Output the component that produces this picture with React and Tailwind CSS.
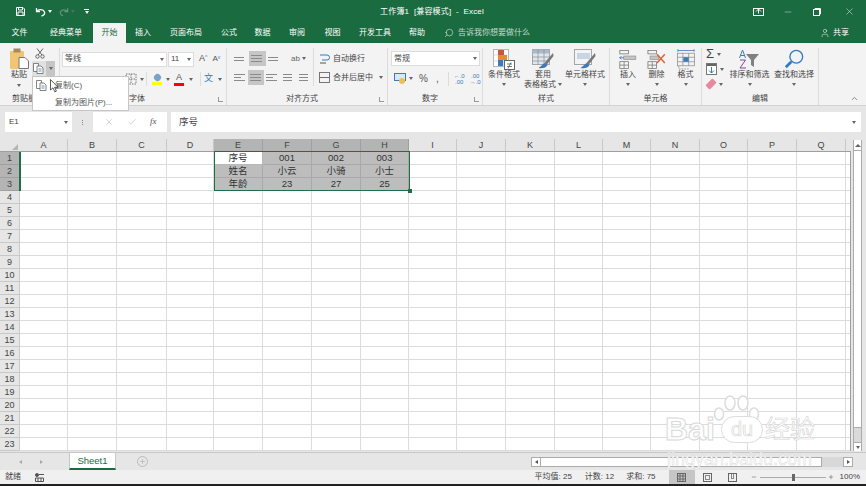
import { Search, User, Minus, X, Check, Plus, ChevronUp } from 'lucide-react'

const columns = [
  ['A', 48], ['B', 49], ['C', 50], ['D', 47], ['E', 49], ['F', 49], ['G', 49], ['H', 48],
  ['I', 48], ['J', 49], ['K', 49], ['L', 48], ['M', 48], ['N', 49], ['O', 48], ['P', 49], ['Q', 49],
]
const rows = Array.from({ length: 23 }, (_, i) => i + 1)
const tabs = [
  ['文件', 'w-[39px]'], ['经典菜单', 'w-[54px]'], ['开始', 'w-[33px]'], ['插入', 'w-[34px]'], ['页面布局', 'w-[52px]'],
  ['公式', 'w-[34px]'], ['数据', 'w-[33px]'], ['审阅', 'w-[36px]'], ['视图', 'w-[35px]'], ['开发工具', 'w-[50px]'], ['帮助', 'w-[34px]'],
]
const cells = {
  E1: '序号', F1: '001', G1: '002', H1: '003',
  E2: '姓名', F2: '小云', G2: '小骑', H2: '小士',
  E3: '年龄', F3: '23', G3: '27', H3: '25',
}

function Caret({ className = '' }) {
  return <span className={`inline-block w-0 h-0 border-x-[2.5px] border-x-transparent border-t-[3px] border-t-[#666] ${className}`} />
}

function AlignIcon({ widths, active }) {
  return (
    <span className={`flex flex-col justify-center gap-[2px] w-[17px] h-[15px] px-[2px] ${active ? 'bg-[#c6c6c6]' : ''}`}>
      {widths.map((w, i) => <span key={i} className="h-px bg-[#8a8a8a]" style={{ width: w }} />)}
    </span>
  )
}

function Group({ width, label, labelClass = 'text-center', launcher, children }) {
  return (
    <div className="relative flex flex-col h-full shrink-0 border-r border-[#dcdcdc]" style={{ width }}>
      <div className="flex-1 min-h-0">{children}</div>
      <div className={`h-[11px] text-[8px] leading-[10px] text-[#444] ${labelClass}`}>{label}</div>
      {launcher && <span className="absolute right-[3px] bottom-[3px] w-[5px] h-[5px] border-l border-b border-[#999]" />}
    </div>
  )
}

function BigButton({ width, lines, caret, children }) {
  return (
    <div className="flex flex-col items-center shrink-0" style={{ width }}>
      <div className="h-[22px] flex items-center justify-center">{children}</div>
      {lines.map(l => <div key={l} className="text-[8px] leading-[10px] text-[#444] whitespace-nowrap">{l}{caret === 'inline' && l === lines[lines.length - 1] ? <Caret className="ml-[2px] align-middle" /> : null}</div>)}
      {caret === true && <Caret className="mt-[3px]" />}
    </div>
  )
}

function PasteIcon() {
  return (
    <svg width="19" height="21" viewBox="0 0 19 21">
      <rect x="0" y="3" width="14" height="18" rx="1" fill="#f0c674" />
      <rect x="3.500" y="0.500" width="7" height="4" fill="#a58a5c" />
      <path d="M9 9.500h6l3.500 3.500v7.500H9z" fill="#fff" stroke="#777" />
    </svg>
  )
}

function CutIcon() {
  return (
    <svg width="10" height="11" viewBox="0 0 10 11" fill="none" stroke="#666" strokeWidth="1">
      <path d="M2 0.500 7 7M8 0.500 3 7" />
      <circle cx="2.500" cy="8.500" r="1.700" />
      <circle cx="7.500" cy="8.500" r="1.700" />
    </svg>
  )
}

function CopyIcon() {
  return (
    <svg width="11" height="11" viewBox="0 0 11 11" fill="#fff" stroke="#666" strokeWidth="0.8">
      <path d="M0.500 0.500h5v8h-5z" />
      <path d="M4 3h4l2 2v5.500H4z" />
      <path d="M5.500 6h3M5.500 8h3" stroke="#3d7ab8" />
    </svg>
  )
}

function BorderIcon() {
  return (
    <svg width="12" height="12" viewBox="0 0 12 12" fill="none" stroke="#777" strokeDasharray="1.500 1">
      <rect x="1" y="1" width="10" height="10" />
      <path d="M6 1v10M1 6h10" />
    </svg>
  )
}

function CondFormatIcon() {
  return (
    <svg width="22" height="21" viewBox="0 0 22 21">
      <rect x="0.500" y="0.500" width="15" height="17" fill="#fff" stroke="#b5b5b5" />
      <path d="M5.500 0.500v17M10.500 0.500v17M0.500 6h15M0.500 12h15" stroke="#cfcfcf" strokeWidth="0.700" />
      <rect x="5" y="1" width="6" height="6" fill="#c8553d" />
      <rect x="5" y="6" width="9" height="5" fill="#e8892c" />
      <rect x="5" y="11" width="5" height="6" fill="#3d7ab8" />
      <rect x="11.500" y="11.500" width="10" height="9" fill="#fff" stroke="#666" />
      <path d="M14 15h5M14 17.500h5M15 19.500l3-6" stroke="#444" strokeWidth="0.700" />
    </svg>
  )
}

function TableIcon({ faded }) {
  return (
    <svg width="22" height="21" viewBox="0 0 22 21">
      <rect x="0.500" y="0.500" width="17" height="15" fill={faded ? '#f4f4f4' : '#dfe6ef'} stroke="#a5a5a5" />
      {faded
        ? <rect x="3" y="4" width="13" height="6" fill="#c7d5e6" />
        : <rect x="0.500" y="0.500" width="17" height="4" fill="#a9b8cc" />}
      {!faded && <path d="M6 0.500v15M12 0.500v15M0.500 8h17M0.500 12h17" stroke="#8d8d8d" strokeWidth="0.700" />}
      <path d="M21 4 12.500 14l2 2L21.500 7z" fill="#777" />
      <path d="M12.500 14c-2 1-3 3-6 5 4 1 8-.5 9-3z" fill="#3d7ab8" />
    </svg>
  )
}

function InsertIcon() {
  return (
    <svg width="18" height="19" viewBox="0 0 20 22" fill="none" stroke="#777" strokeWidth="0.900">
      <rect x="0.500" y="0.500" width="10" height="4" />
      <rect x="5" y="7" width="14" height="4" fill="#c5c5c5" stroke="#999" />
      <path d="M0 9h5M2.500 7 0.500 9l2 2" stroke="#2f6fb0" />
      <rect x="0.500" y="13.500" width="10" height="8" />
      <path d="M5.500 13.500v8M0.500 17.500h10" />
    </svg>
  )
}

function DeleteIcon() {
  return (
    <svg width="20" height="19" viewBox="0 0 22 22" fill="none" stroke="#777" strokeWidth="0.900">
      <rect x="0.500" y="0.500" width="10" height="4" />
      <rect x="3" y="7" width="10" height="4" fill="#c5c5c5" stroke="#999" />
      <rect x="0.500" y="13.500" width="10" height="8" />
      <path d="M5.500 13.500v8M0.500 17.500h10" />
      <path d="M11 5l9 10M20 5l-9 10" stroke="#d9663c" strokeWidth="1.800" />
    </svg>
  )
}

function FormatIcon() {
  return (
    <svg width="18" height="21" viewBox="0 0 20 23" fill="none" stroke="#888" strokeWidth="0.800">
      <path d="M1 1.500h18M1 0v3M19 0v3" stroke="#2f6fb0" />
      <rect x="0.500" y="4.500" width="19" height="14" />
      <path d="M6.500 4.500v14M13 4.500v14M0.500 9h19M0.500 14h19" />
      <rect x="7" y="9" width="6" height="5" fill="#3d7ab8" stroke="none" />
      <path d="M2 19v3h12" strokeDasharray="2 1" />
    </svg>
  )
}

function SortIcon() {
  return (
    <svg width="21" height="20" viewBox="0 0 21 20">
      <path d="M0.500 9 3.500 1 6.500 9M1.500 6.500h4" fill="none" stroke="#3d7ab8" strokeWidth="1" />
      <path d="M1 11h5.500L1 19h6" fill="none" stroke="#7c4aa0" strokeWidth="1" />
      <path d="M7 5h13l-5 6v7l-3-2v-5z" fill="#808080" />
    </svg>
  )
}

function SearchBig() {
  return (
    <svg width="20" height="20" viewBox="0 0 22 22" fill="none" stroke="#2f7cc1">
      <circle cx="13.500" cy="8.500" r="7" strokeWidth="1.500" />
      <path d="M8 14 2 20" strokeWidth="3" />
    </svg>
  )
}

function Ribbon() {
  return (
    <div className="flex h-[63px] bg-[#f3f3f3] pt-[5px] border-b border-[#d2d2d2]">
      <Group width={60} label="剪贴板" labelClass="pl-[12px]">
        <div className="flex">
          <div className="w-[32px] flex flex-col items-center pl-[6px]">
            <PasteIcon />
            <div className="text-[8px] leading-[10px] text-[#444] mt-[1px]">粘贴</div>
            <Caret className="mt-[4px]" />
          </div>
          <div className="flex flex-col items-start">
            <span className="h-[13px] pl-[3px]"><CutIcon /></span>
            <span className="flex h-[15px]">
              <span className="flex items-center w-[14px] pl-[1px] bg-[#e0e0e0]"><CopyIcon /></span>
              <span className="flex items-center justify-center w-[9px] bg-[#c6c6c6]"><Caret /></span>
            </span>
          </div>
        </div>
      </Group>

      <Group width={167} label="字体" labelClass="text-center pr-[12px]" launcher>
        <div className="flex items-center gap-[1px] pl-[2px] h-[16px] mt-[3px]">
          <div className="flex items-center justify-between w-[105px] h-[15px] bg-white border border-[#dcdcdc] px-[2px] text-[8px] text-[#444]">等线<Caret /></div>
          <div className="flex items-center justify-between w-[26px] h-[15px] bg-white border border-[#dcdcdc] px-[2px] text-[8px] text-[#444]">11<Caret /></div>
          <span className="ml-[4px] text-[9px] text-[#555]">A<sup className="text-[5px] text-[#3d7ab8]">^</sup></span>
          <span className="ml-[4px] text-[8px] text-[#555]">A<sup className="text-[5px] text-[#3d7ab8]">v</sup></span>
        </div>
        <div className="flex items-center h-[16px] mt-[4px] pl-[65px]">
          <BorderIcon /><Caret className="ml-[3px]" />
          <span className="w-px h-[14px] bg-[#dcdcdc] ml-[2px]" />
          <span className="ml-[5px] flex flex-col items-center w-[10px]">
            <span className="w-[7px] h-[7px] rounded-sm bg-[#7aa3c9] rotate-45" />
            <span className="w-[10px] h-[3px] mt-[1px] bg-[#ffff00]" />
          </span>
          <Caret className="ml-[4px]" />
          <span className="ml-[4px] flex flex-col items-center w-[10px]">
            <span className="text-[9px] leading-[9px] text-[#555]">A</span>
            <span className="w-[10px] h-[3px] mt-[1px] bg-[#ff0000]" />
          </span>
          <Caret className="ml-[5px]" />
          <span className="w-px h-[14px] bg-[#dcdcdc] ml-[7px]" />
          <span className="ml-[3px] text-[9px] text-[#2f7cc1]">文</span>
          <Caret className="ml-[5px]" />
        </div>
      </Group>

      <Group width={161} label="对齐方式" labelClass="text-center pr-[10px]" launcher>
        <div className="flex h-[42px]">
          <div className="flex flex-col gap-[4px] pt-[3px] pl-[5px] w-[87px] border-r border-[#dcdcdc] h-[38px]">
            <div className="flex items-center h-[15px]">
              <AlignIcon widths={[10, 10]} /><AlignIcon widths={[11, 11, 11]} active /><AlignIcon widths={[10, 10]} />
              <span className="ml-[8px] text-[8px] text-[#666]">ab</span><Caret className="ml-[2px]" />
            </div>
            <div className="flex items-center h-[15px]">
              <AlignIcon widths={[11, 7, 11]} /><AlignIcon widths={[11, 11, 11]} active /><AlignIcon widths={[11, 7, 11]} />
              <AlignIcon widths={[9, 9, 9]} /><AlignIcon widths={[9, 9, 9]} />
            </div>
          </div>
          <div className="flex flex-col gap-[4px] pt-[3px] pl-[5px] text-[8px] text-[#444]">
            <div className="flex items-center gap-[3px] h-[15px]">
              <svg width="11" height="12" viewBox="0 0 11 12" fill="none" stroke="#555"><path d="M1 2h7a2.500 2.500 0 0 1 0 5H3" stroke="#2f7cc1" /><path d="M1 10h6" /></svg>
              自动换行
            </div>
            <div className="flex items-center gap-[3px] h-[15px] whitespace-nowrap">
              <svg width="11" height="11" viewBox="0 0 11 11" fill="none" stroke="#777"><rect x="0.500" y="0.500" width="10" height="10" /><path d="M0.500 5.500h10" stroke="#2f7cc1" /></svg>
              合并后居中<Caret className="ml-[3px]" />
            </div>
          </div>
        </div>
      </Group>

      <Group width={95} label="数字" labelClass="text-center pr-[10px]" launcher>
        <div className="flex items-center justify-between w-[89px] h-[15px] mt-[3px] ml-[3px] bg-white border border-[#dcdcdc] px-[2px] text-[8px] text-[#444]">常规<Caret /></div>
        <div className="flex items-center h-[15px] mt-[5px] pl-[6px] text-[10px] text-[#555]">
          <svg width="12" height="11" viewBox="0 0 12 11"><rect x="0.500" y="0.500" width="11" height="7" fill="#dbe8f4" stroke="#3d7ab8" /><circle cx="8" cy="8" r="3" fill="#efc04f" /></svg>
          <Caret className="ml-[3px]" />
          <span className="ml-[6px]">%</span>
          <span className="ml-[8px]">,</span>
          <span className="w-px h-[14px] bg-[#dcdcdc] ml-[9px]" />
          <span className="ml-[5px] text-[6px] leading-[6px] text-center text-[#3d7ab8]">←.0<br />.00</span>
          <span className="ml-[5px] text-[6px] leading-[6px] text-center text-[#3d7ab8]">.00<br />→.0</span>
        </div>
      </Group>

      <Group width={127} label="样式">
        <div className="flex pl-[2px]">
          <BigButton width={38} lines={['条件格式']} caret><CondFormatIcon /></BigButton>
          <BigButton width={40} lines={['套用', '表格格式']} caret="inline"><TableIcon /></BigButton>
          <BigButton width={44} lines={['单元格样式']} caret><TableIcon faded /></BigButton>
        </div>
      </Group>

      <Group width={92} label="单元格">
        <div className="flex pl-[4px]">
          <BigButton width={28} lines={['插入']} caret><InsertIcon /></BigButton>
          <BigButton width={29} lines={['删除']} caret><DeleteIcon /></BigButton>
          <BigButton width={29} lines={['格式']} caret><FormatIcon /></BigButton>
        </div>
      </Group>

      <Group width={117} label="编辑">
        <div className="flex">
          <div className="flex flex-col gap-[3px] pl-[4px] w-[25px] shrink-0">
            <span className="flex items-center gap-[3px] h-[12px] text-[13px] leading-[12px] text-[#444]">Σ<Caret /></span>
            <span className="flex items-center gap-[3px] h-[12px]">
              <svg width="11" height="12" viewBox="0 0 11 12"><rect x="0.500" y="0.500" width="10" height="11" fill="#fff" stroke="#777" /><rect x="1" y="1" width="9" height="2" fill="#666" /><path d="M5.500 4v6M3 7.500 5.500 10 8 7.500" fill="none" stroke="#2f7cc1" /></svg>
              <Caret />
            </span>
            <span className="flex items-center gap-[3px] h-[12px]">
              <span className="w-[10px] h-[6px] bg-[#e48a9a] -rotate-45 rounded-[1px]" />
              <Caret />
            </span>
          </div>
          <BigButton width={45} lines={['排序和筛选']} caret><SortIcon /></BigButton>
          <BigButton width={44} lines={['查找和选择']} caret><SearchBig /></BigButton>
        </div>
      </Group>

      <div className="flex-1 flex items-end justify-end pr-[7px] pb-[2px]">
        <ChevronUp size={9} color="#666" />
      </div>
    </div>
  )
}

function Sheet() {
  return (
    <div className="flex-1 flex min-h-0 bg-[#e6e6e6]">
      <div className="relative w-[851px] shrink-0">
        <div className="flex h-[13px] bg-[#e6e6e6] border-b border-[#9f9f9f]">
          <div className="w-[20px] shrink-0 flex items-end justify-end pr-[2px] pb-[1px]">
            <span className="w-0 h-0 border-l-[6px] border-l-transparent border-b-[6px] border-b-[#b5b5b5]" />
          </div>
          {columns.map(([c, w]) => (
            <div
              key={c}
              style={{ width: w }}
              className={`shrink-0 text-center text-[9px] leading-[12px] text-[#444] border-r ${'EFGH'.includes(c) ? 'bg-[#b4b4b4] border-[#a0a0a0]' : 'border-[#c8c8c8]'}`}
            >
              {c}
            </div>
          ))}
        </div>
        {rows.map(r => (
          <div key={r} className="flex h-[13px] bg-white border-r border-[#9f9f9f]">
            <div className={`w-[20px] shrink-0 text-center text-[9px] leading-[12px] text-[#444] border-r border-b ${r <= 3 ? 'bg-[#b4b4b4] border-[#a0a0a0]' : 'bg-[#e6e6e6] border-[#c8c8c8]'}`}>{r}</div>
            {columns.map(([c, w]) => {
              const selected = r <= 3 && 'EFGH'.includes(c)
              const first = r === 1 && c === 'E'
              return (
                <div
                  key={c}
                  style={{ width: w }}
                  className={`shrink-0 text-center text-[9.500px] leading-[12px] text-[#333] border-r border-b ${first ? 'bg-white border-[#b8b8b8]' : selected ? 'bg-[#bdbdbd] border-[#a9a9a9]' : 'border-[#dcdcdc]'}`}
                >
                  {cells[c + r]}
                </div>
              )
            })}
            <div className="flex-1 border-b border-[#dcdcdc]" />
          </div>
        ))}
        {/* selection border */}
        <div className="absolute left-[214px] top-[12px] w-[196px] h-[40px] border-[1.500px] border-[#1f6e46]">
          <span className="absolute -right-[3px] -bottom-[3px] w-[4px] h-[4px] bg-[#1f6e46]" />
        </div>
        <div className="absolute left-[19px] top-[13px] w-[1.500px] h-[39px] bg-[#1f6e46]" />
      </div>
      <div className="w-[15px] shrink-0 pl-[2px] pr-[4px] pt-[1px]">
        <div className="flex flex-col h-[311px] border-x border-[#ababab] bg-[#dadada]">
          <div className="h-[11px] flex items-center justify-center border-b border-[#ababab] bg-white">
            <span className="w-0 h-0 border-x-[3px] border-x-transparent border-b-[3px] border-b-[#666]" />
          </div>
          <div className="h-[277px] bg-white border-b border-[#ababab]" />
          <div className="flex-1" />
          <div className="h-[9px] flex items-center justify-center bg-white border-t border-[#ababab]">
            <Caret />
          </div>
        </div>
      </div>
    </div>
  )
}

export default function App() {
  return (
    <div className="relative w-[866px] h-[486px] overflow-hidden flex flex-col bg-[#e6e6e6] font-['Liberation_Sans','Noto_Sans_CJK_SC',sans-serif]">
      {/* ── Title bar ─────────────────────────── */}
      <div className="relative flex items-center h-[23px] bg-[#1b6b40] text-white">
        <svg className="ml-[16px]" width="9" height="9" viewBox="0 0 9 9" fill="none" stroke="#fff"><path d="M0.500 0.500h6.500l1.500 1.500v6.500h-8z" /><path d="M2.500 0.500v2.500h4v-2.500M2 8.500v-3.500h5v3.500" /></svg>
        <svg className="ml-[10px]" width="11" height="10" viewBox="0 0 11 10" fill="none" stroke="#fff" strokeWidth="1.300"><path d="M1.500 1v3.500h3.500" /><path d="M1.500 4.500c2-2.500 7-2.500 8 .5 .5 2-1 3.500-3 4" /></svg>
        <Caret className="ml-[2px] border-t-white" />
        <svg className="ml-[7px] opacity-30" width="10" height="10" viewBox="0 0 11 10" fill="none" stroke="#fff" strokeWidth="1.300"><path d="M9.500 1v3.500h-3.500" /><path d="M9.500 4.500c-2-2.500-7-2.500-8 .5 -.5 2 1 3.500 3 4" /></svg>
        <Caret className="ml-[2px] border-t-[#5d9a7b]" />
        <span className="ml-[9px] flex flex-col items-center gap-[1px]"><span className="w-[5px] h-px bg-white" /><Caret className="border-t-white" /></span>
        <div className="flex-1 text-center text-[8px] pl-[22px] whitespace-pre tracking-[0.15px]">工作簿1  [兼容模式]  -  Excel</div>
        <svg width="11" height="8" viewBox="0 0 11 8" fill="none" stroke="#fff" className="mr-[19px]"><rect x="0.500" y="0.500" width="10" height="7" /><path d="M3 3.500 5.500 1 8 3.500M5.500 1.500v4" /></svg>
        <Minus size={10} strokeWidth={1} className="mr-[20px]" />
        <svg width="8" height="8" viewBox="0 0 8 8" fill="none" stroke="#fff" className="mr-[23px]"><rect x="0.500" y="1.500" width="6" height="6" /><path d="M2 1V0.500h5.500V6H7" /></svg>
        <X size={11} strokeWidth={1} className="mr-[11px]" />
      </div>

      {/* ── Tabs ──────────────────────────────── */}
      <div className="flex items-center h-[20px] bg-[#1b6b40] text-white text-[8px]">
        {tabs.map(([t, w]) => (
          <div key={t} className={`${w} h-full flex items-center justify-center ${t === '开始' ? 'bg-[#f3f3f3] text-[#1b6b40]' : ''}`}>{t}</div>
        ))}
        <Search size={10} strokeWidth={1.200} className="ml-[10px] -scale-x-100" />
        <span className="ml-[4px] text-[#c5dacd]">告诉我你想要做什么</span>
        <div className="flex-1" />
        <User size={10} strokeWidth={1.200} className="mr-[3px]" />
        <span className="mr-[17px]">共享</span>
      </div>

      <Ribbon />

      {/* ── Formula bar ───────────────────────── */}
      <div className="flex items-start h-[33px] pt-[6px] pl-[5px] pr-[5px] bg-[#e6e6e6]">
        <div className="flex items-center justify-between w-[67px] h-[20px] bg-white pl-[4px] pr-[4px] text-[8px] text-[#444]">E1<Caret /></div>
        <div className="w-[21px] h-[20px] flex flex-col items-center justify-center gap-[1px]">
          <span className="w-px h-px bg-[#888]" /><span className="w-px h-px bg-[#888]" /><span className="w-px h-px bg-[#888]" />
        </div>
        <div className="flex items-center justify-around w-[74px] h-[20px] bg-white px-[4px] text-[#aaa]">
          <X size={10} strokeWidth={1.200} />
          <Check size={10} strokeWidth={1.200} />
          <span className="font-['Liberation_Serif',serif] italic text-[9px] text-[#555]">fx</span>
        </div>
        <div className="flex-1 flex items-center justify-between h-[20px] ml-[4px] bg-white pl-[8px] pr-[5px] text-[9.500px] text-[#444]">序号<Caret /></div>
      </div>

      <Sheet />

      {/* ── Sheet tabs ────────────────────────── */}
      <div className="flex items-center h-[18px] bg-[#e6e6e6] border-t border-[#c8c8c8]">
        <span className="ml-[19px] w-0 h-0 border-y-[2.500px] border-y-transparent border-r-[3px] border-r-[#aaa]" />
        <span className="ml-[18px] w-0 h-0 border-y-[2.500px] border-y-transparent border-l-[3px] border-l-[#aaa]" />
        <div className="ml-[26px] w-[47px] h-full bg-white border-x border-[#c8c8c8] border-b-2 border-b-[#1b6b40] text-center text-[9.500px] leading-[15px] text-[#1b6b40]">Sheet1</div>
        <span className="ml-[21px] flex items-center justify-center w-[11px] h-[11px] rounded-full border border-[#bbb] text-[#aaa]"><Plus size={7} /></span>
        <div className="flex-1" />
        <div className="flex items-center h-[10px] mr-[13px]">
          <span className="flex items-center justify-center w-[10px] h-full bg-white border border-[#ababab]"><span className="w-0 h-0 border-y-[2.500px] border-y-transparent border-r-[3px] border-r-[#555]" /></span>
          <span className="w-[281px] h-full bg-white border-y border-r border-[#ababab]" />
          <span className="w-[21px] h-full bg-[#d8d8d8]" />
          <span className="flex items-center justify-center w-[10px] h-full bg-white border border-[#ababab]"><span className="w-0 h-0 border-y-[2.500px] border-y-transparent border-l-[3px] border-l-[#555]" /></span>
        </div>
      </div>

      {/* ── Status bar ────────────────────────── */}
      <div className="flex items-center h-[14px] bg-[#f0f0f0] text-[8px] text-[#444]">
        <span className="ml-[5px]">就绪</span>
        <svg className="ml-[14px]" width="9" height="9" viewBox="0 0 9 9" fill="none" stroke="#555"><circle cx="2" cy="2" r="1.500" fill="#555" /><path d="M4 1.500h5M0.500 5h8v3.500h-8zM3 5v3.500M6 5v3.500" /></svg>
        <div className="flex-1" />
        <span className="mr-[13px]">平均值: 25</span>
        <span className="mr-[12px]">计数: 12</span>
        <span className="mr-[13px]">求和: 75</span>
        <span className="flex items-center justify-center w-[26px] h-full bg-[#c6c6c6]">
          <svg width="9" height="9" viewBox="0 0 9 9" fill="none" stroke="#666"><rect x="0.500" y="0.500" width="8" height="8" /><path d="M3 .5v8M6 .5v8M.5 3h8M.5 6h8" /></svg>
        </span>
        <span className="ml-[8px] w-[9px] h-[9px] border border-[#666] flex items-center justify-center"><span className="w-[5px] h-[5px] border border-[#888]" /></span>
        <span className="ml-[16px] w-[9px] h-[9px] border border-[#666] flex justify-center"><span className="w-[3px] h-[5px] border-x border-b border-[#888]" /></span>
        <Minus size={6} className="ml-[14px] text-[#555]" />
        <span className="relative ml-[3px] w-[66px] h-px bg-[#aaa]">
          <span className="absolute left-[32px] -top-[3px] w-[3px] h-[7px] bg-[#666]" />
        </span>
        <Plus size={6} className="ml-[2px] text-[#555]" />
        <span className="ml-[6px] mr-[6px]">100%</span>
      </div>
      <div className="h-[2px] bg-[#222]" />

      {/* ── Copy dropdown ─────────────────────── */}
      <div className="absolute left-[32px] top-[76px] w-[97px] h-[35px] bg-white border border-[#c6c6c6] text-[8px] text-[#555]">
        <div className="flex items-center h-[17px] pl-[3px]">
          <CopyIcon />
          <span className="ml-[8px]">复制(C)</span>
        </div>
        <div className="h-[16px] pl-[22px] leading-[17px]">复制为图片(P)...</div>
      </div>
      <svg className="absolute left-[50px] top-[79px]" width="10" height="14" viewBox="0 0 10 14" fill="#fff" stroke="#333" strokeWidth="0.800"><path d="M0.500 0.500v10.500l2.500-2.200 1.800 4 1.600-.7-1.800-3.800h3.400z" /></svg>

      {/* ── Watermark ─────────────────────────── */}
      <div className="absolute left-[665px] top-[394px] w-[155px] h-[74px] pointer-events-none text-white">
        <svg className="absolute left-[48px] top-0" width="48" height="28" viewBox="0 0 48 28" fill="#fff" stroke="#dcdcdc" strokeWidth="1.500">
          <ellipse cx="6" cy="20" rx="4.500" ry="6" />
          <ellipse cx="17" cy="9" rx="5" ry="7" />
          <ellipse cx="30" cy="9" rx="5" ry="7" />
          <ellipse cx="41" cy="20" rx="4.500" ry="6" />
        </svg>
        <div className="absolute left-0 top-[22px] text-[32px] leading-[26px] font-bold [-webkit-text-stroke:1px_#d8d8d8]">Bai</div>
        <div className="absolute left-[56px] top-[22px] w-[42px] h-[27px] rounded-full bg-white border border-[#dcdcdc] text-center text-[20px] leading-[24px] [-webkit-text-stroke:0.700px_#d8d8d8]">du</div>
        <div className="absolute left-[100px] top-[22px] text-[25px] leading-[27px] whitespace-nowrap [-webkit-text-stroke:0.700px_#d8d8d8]">经验</div>
        <div className="absolute left-[2px] top-[57px] text-[18px] leading-[17px] whitespace-nowrap [-webkit-text-stroke:0.500px_#d8d8d8]">jingyan.baidu.com</div>
      </div>
    </div>
  )
}
